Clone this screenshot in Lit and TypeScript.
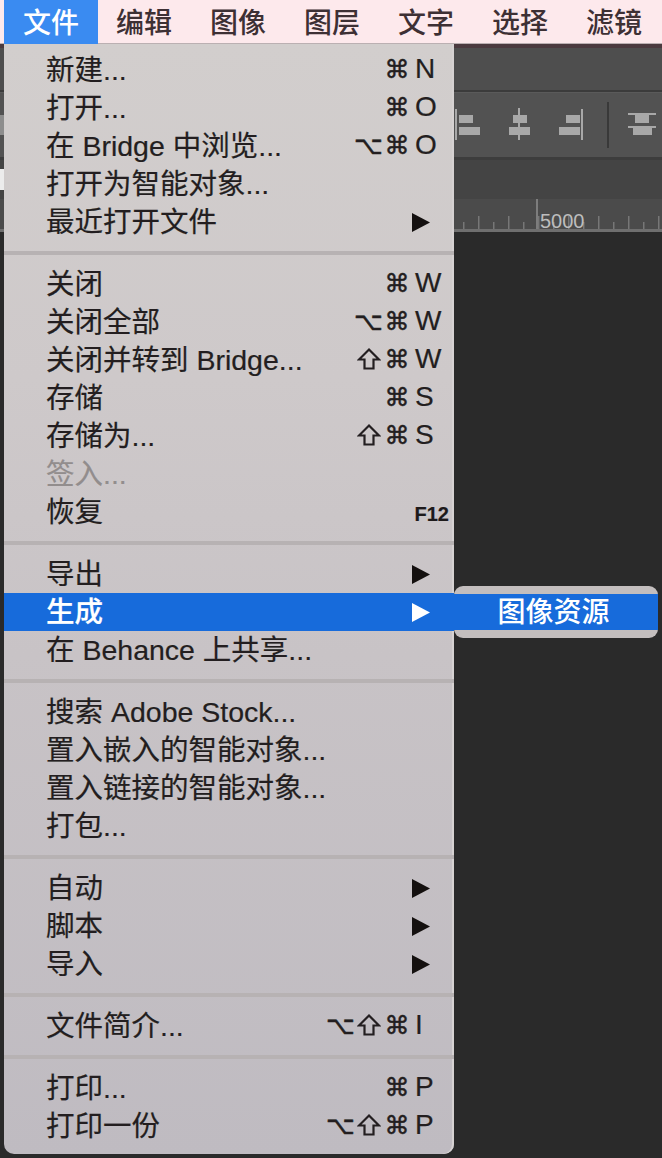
import { LitElement, html, css, svg } from "lit";
import { customElement } from "lit/decorators.js";

type Item = { t: string; mods?: string[]; key?: string; fn?: string; arrow?: boolean; off?: boolean; on?: boolean };

const groups: Item[][] = [
  [
    { t: "新建...", mods: ["⌘"], key: "N" },
    { t: "打开...", mods: ["⌘"], key: "O" },
    { t: "在 Bridge 中浏览...", mods: ["⌥", "⌘"], key: "O" },
    { t: "打开为智能对象..." },
    { t: "最近打开文件", arrow: true },
  ],
  [
    { t: "关闭", mods: ["⌘"], key: "W" },
    { t: "关闭全部", mods: ["⌥", "⌘"], key: "W" },
    { t: "关闭并转到 Bridge...", mods: ["⇧", "⌘"], key: "W" },
    { t: "存储", mods: ["⌘"], key: "S" },
    { t: "存储为...", mods: ["⇧", "⌘"], key: "S" },
    { t: "签入...", off: true },
    { t: "恢复", fn: "F12" },
  ],
  [
    { t: "导出", arrow: true },
    { t: "生成", arrow: true, on: true },
    { t: "在 Behance 上共享..." },
  ],
  [
    { t: "搜索 Adobe Stock..." },
    { t: "置入嵌入的智能对象..." },
    { t: "置入链接的智能对象..." },
    { t: "打包..." },
  ],
  [
    { t: "自动", arrow: true },
    { t: "脚本", arrow: true },
    { t: "导入", arrow: true },
  ],
  [{ t: "文件简介...", mods: ["⌥", "⇧", "⌘"], key: "I" }],
  [
    { t: "打印...", mods: ["⌘"], key: "P" },
    { t: "打印一份", mods: ["⌥", "⇧", "⌘"], key: "P" },
  ],
];

const titles = ["文件", "编辑", "图像", "图层", "文字", "选择", "滤镜"];

const ticks: number[] = [];
for (let x = 463; x < 662; x += 15) ticks.push(x);

@customElement("app-root")
export class AppRoot extends LitElement {
  static styles = css`
    :host {
      display: block;
      position: relative;
      width: 662px;
      height: 1158px;
      overflow: hidden;
      background: #2a2a2a;
      font-family: "Liberation Sans", "Noto Sans CJK SC", sans-serif;
      color: #231e20;
    }
    .bar {
      display: flex;
      height: 44px;
      padding-left: 4px;
      background: #fde9ec;
      box-sizing: border-box;
      border-bottom: 1px solid #bbb0b2;
    }
    .title {
      width: 94px;
      height: 44px;
      box-sizing: border-box;
      padding: 0 2px 2px 0;
      display: flex;
      align-items: center;
      justify-content: center;
      font-size: 28px;
      font-weight: 500;
      color: #3d3034;
    }
    .title.on {
      padding-right: 0;
      background: #3a8bf1;
      color: #fff;
    }
    .app { display: flex; flex-direction: column; }
    .s0 { height: 4px; background: #4b3a3f; }
    .s1 { height: 42px; background: #4e4e4e; border-bottom: 2px solid #3b3b3b; }
    .s2 { height: 64px; background: #525252; border-top: 1px solid #5a5a5a; border-bottom: 3px solid #3d3d3d; }
    .s2 svg, .rul svg { display: block; }
    .s3 { height: 39px; background: #444; }
    .rul { height: 33px; background: #4b4b4b; position: relative; }
    .rul span {
      position: absolute;
      left: 540px;
      top: 10px;
      font-size: 20px;
      line-height: 24px;
      color: #bdbdbd;
    }
    .menu {
      position: absolute;
      left: 4px;
      top: 44px;
      width: 450px;
      height: 1110px;
      box-sizing: border-box;
      padding-top: 7px;
      border-radius: 0 0 10px 10px;
      background: linear-gradient(180deg, #d2cecd 0%, #cec9ca 30%, #c8c3c6 55%, #bfbbc1 100%);
      box-shadow: inset -2px 0 0 #d6d2d2;
    }
    .sep {
      height: 4px;
      margin: 10px 0;
      background: #b7b2b3;
    }
    .row {
      height: 38px;
      box-sizing: border-box;
      padding: 0 0 6px 42px;
      display: flex;
      align-items: center;
      position: relative;
      font-size: 28.5px;
      white-space: nowrap;
      -webkit-text-stroke: 0.2px currentColor;
    }
    .row.off { color: #928d8d; }
    .row.on { background: #176bdb; color: #fff; font-weight: 500; }
    .sc {
      position: absolute;
      left: 322px;
      top: -1px;
      height: 38px;
      width: 124px;
      display: grid;
      grid-template-columns: 28px 29px 28px auto;
      align-items: center;
      font-size: 28px;
    }
    .key { margin-left: 4px; }
    .sym {
      font-family: "DejaVu Sans", sans-serif;
      font-size: 25px;
      text-align: center;
      -webkit-text-stroke: 0.5px currentColor;
    }
    .shift {
      display: block;
      width: 24px;
      height: 24px;
      margin: 0 auto;
      fill: none;
      stroke: currentColor;
      stroke-width: 2.2;
      stroke-linejoin: miter;
    }
    .fn {
      position: absolute;
      right: 5px;
      top: 9px;
      font-size: 20px;
      line-height: 24px;
      font-weight: 700;
      color: #1d1a1b;
    }
    .tri {
      position: absolute;
      left: 408px;
      top: 10px;
      width: 18px;
      height: 19px;
      display: block;
      fill: #14100f;
    }
    .row.on .tri { fill: #fff; }
    .sub {
      position: absolute;
      left: 454px;
      top: 586px;
      width: 204px;
      height: 52px;
      box-sizing: border-box;
      padding-top: 8px;
      border-radius: 9px;
      background: #c3bebe;
    }
    .sub div {
      height: 36px;
      box-sizing: border-box;
      padding: 0 5px 5px 0;
      display: flex;
      align-items: center;
      justify-content: center;
      background: #176bdb;
      color: #fff;
      font-size: 28px;
      font-weight: 500;
    }
    .edge {
      position: absolute;
      left: 0;
      top: 115px;
      width: 4px;
      height: 20px;
      background: #8d8d8d;
    }
    .edge.b { top: 169px; height: 21px; background: #ececec; }
  `;

  private toolbar() {
    const c = "#a8a8a8";
    return html`<svg width="662" height="60" viewBox="0 0 662 60">
      ${svg`
        <g fill=${c} transform="translate(0,-93)">
          <rect x="455" y="109" width="2" height="31"/>
          <rect x="459" y="115" width="14" height="8"/>
          <rect x="459" y="127" width="21" height="8"/>
          <rect x="518" y="108" width="2" height="32"/>
          <rect x="513" y="115" width="14" height="8"/>
          <rect x="509" y="127" width="21" height="8"/>
          <rect x="581" y="109" width="2" height="31"/>
          <rect x="566" y="115" width="14" height="8"/>
          <rect x="559" y="127" width="21" height="8"/>
          <rect x="628" y="113" width="28" height="2"/>
          <rect x="635" y="115" width="14" height="8"/>
          <rect x="628" y="126" width="28" height="2"/>
          <rect x="633" y="128" width="19" height="7"/>
        </g>
        <rect x="607" y="9" width="2" height="46" fill="#393939"/>
      `}
    </svg>`;
  }

  private ruler() {
    return html`<svg width="662" height="33" viewBox="0 0 662 33">
      ${svg`
        <rect x="0" y="30" width="662" height="3" fill="#6f6f6f"/>
        <rect x="536" y="0" width="2" height="30" fill="#7d7d7d"/>
        ${ticks.map((x, i) => {
          const h = i % 2 ? 13 : 7;
          return svg`<rect x=${x} y=${30 - h} width="1.5" height=${h} fill="#777"/>`;
        })}
      `}
    </svg>`;
  }

  private sym(s: string) {
    if (s === "⇧") {
      return html`<svg class="shift" viewBox="0 0 24 24" role="img" aria-label="⇧">
        <path d="M12 2.5L22 12.5H16.5V21.5H7.5V12.5H2Z" />
      </svg>`;
    }
    return html`<span class="sym">${s}</span>`;
  }

  private shortcut(i: Item) {
    if (!i.key) return "";
    const m = i.mods || [];
    const hasAlt = m.includes("⌥");
    const hasShift = m.includes("⇧");
    const s1 = hasAlt && hasShift ? "⌥" : "";
    const s2 = hasShift ? "⇧" : hasAlt ? "⌥" : "";
    return html`<div class="sc">
      <span>${s1 ? this.sym(s1) : ""}</span>
      <span>${s2 ? this.sym(s2) : ""}</span>
      ${this.sym("⌘")}
      <span class="key">${i.key}</span>
    </div>`;
  }

  private row(i: Item) {
    const cls = ["row", i.off ? "off" : "", i.on ? "on" : ""].join(" ");
    return html`<div class=${cls}>
      <span>${i.t}</span>
      ${this.shortcut(i)}
      ${i.fn ? html`<span class="fn">${i.fn}</span>` : ""}
      ${i.arrow
        ? html`<svg class="tri" viewBox="0 0 18 19"><path d="M0 0L18 9.5L0 19Z" /></svg>`
        : ""}
    </div>`;
  }

  render() {
    return html`
      <div class="bar">
        ${titles.map((t, i) => html`<div class="title ${i === 0 ? "on" : ""}">${t}</div>`)}
      </div>
      <div class="app">
        <div class="s0"></div>
        <div class="s1"></div>
        <div class="s2">${this.toolbar()}</div>
        <div class="s3"></div>
        <div class="rul">${this.ruler()}<span>5000</span></div>
      </div>
      <div class="edge"></div>
      <div class="edge b"></div>
      <div class="menu">
        ${groups.map(
          (g, gi) => html`${gi ? html`<div class="sep"></div>` : ""}${g.map((i) => this.row(i))}`
        )}
      </div>
      <div class="sub"><div>图像资源</div></div>
    `;
  }
}
